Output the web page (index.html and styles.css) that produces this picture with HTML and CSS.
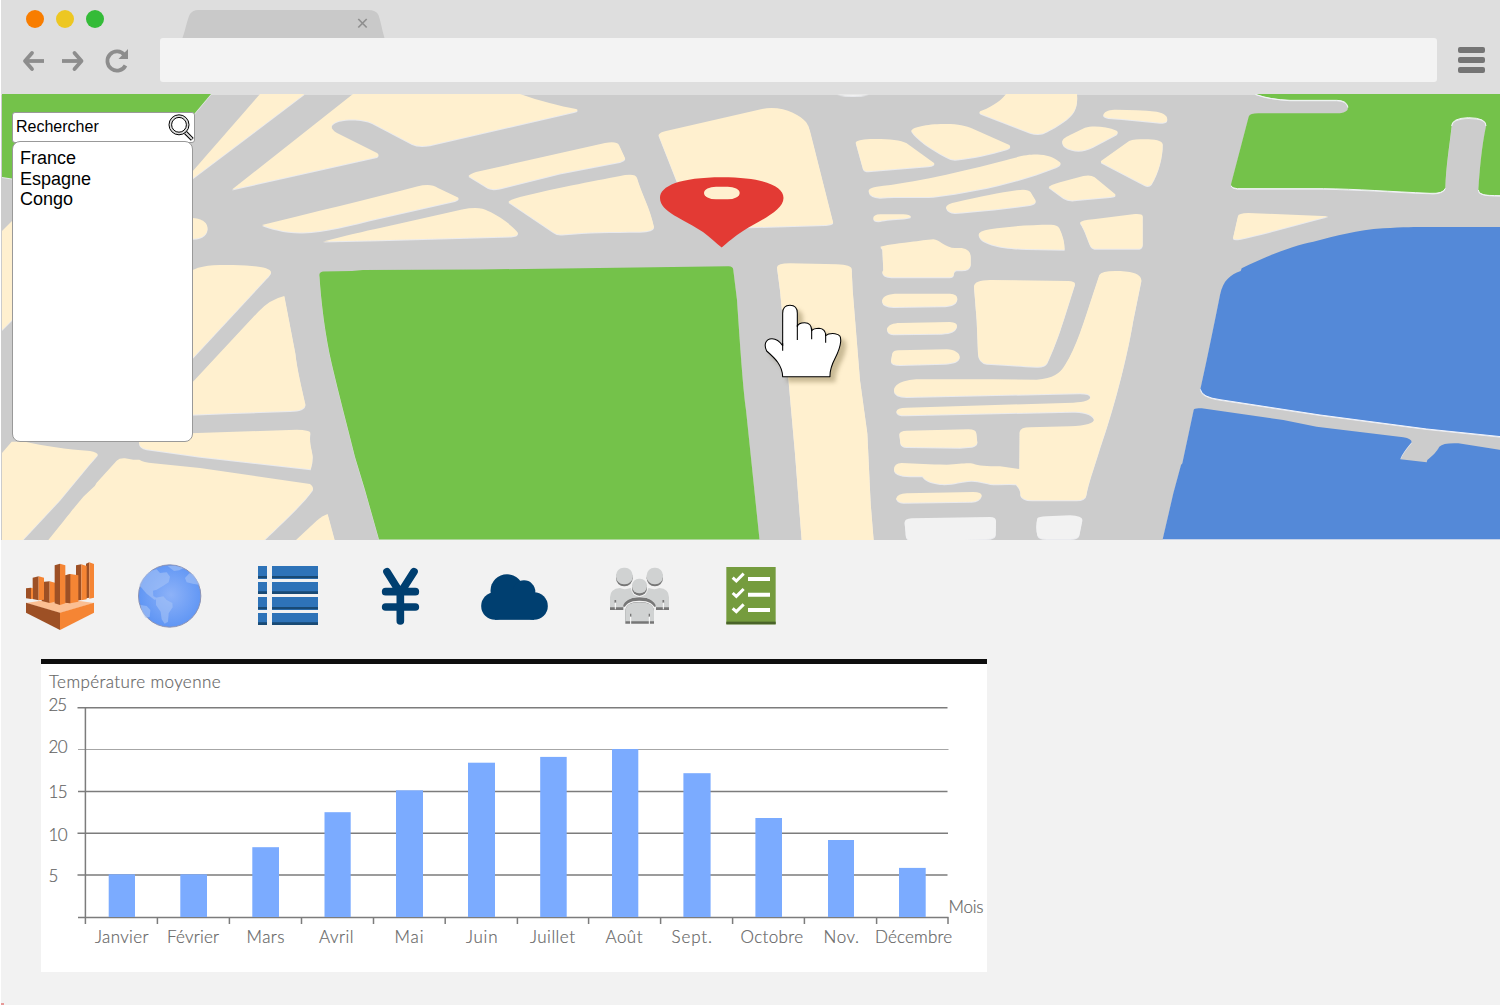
FILE: index.html
```
<!DOCTYPE html>
<html lang="fr">
<head>
<meta charset="utf-8">
<title>Carte</title>
<link rel="stylesheet" href="styles.css">
</head>
<body>
<div class="window">
  <header class="chrome">
    <div class="tab-row">
      <span class="light light-red"></span>
      <span class="light light-yellow"></span>
      <span class="light light-green"></span>
      <svg class="tab" viewBox="182 10 203 28" width="203" height="28">
        <path fill="#c9c9c9" d="M182.500,38C186,28 187,20 190,14Q193,10 198,10H368Q376,10 378.500,15C381,22 382,30 384.500,38Z"/>
        <path stroke="#8f8f8f" stroke-width="1.700" d="M358.300,19L366.700,27.500M366.700,19L358.300,27.500"/>
      </svg>
    </div>
    <div class="nav-row">
      <svg class="nav-icons" viewBox="18 43.500 116 34" width="116" height="34" fill="none" stroke="#8d8d8d" stroke-width="3.800">
        <path stroke-linecap="round" stroke-linejoin="round" d="M32,53.500L25,61.500L32,69.500"/><path d="M25,61.500H44"/>
        <path stroke-linecap="round" stroke-linejoin="round" d="M74.500,53.500L81.500,61.500L74.500,69.500"/><path d="M62,61.500H81"/>
        <path d="M124.500,55.500A9.600,9.600 0 1 0 125.500,66"/>
        <path fill="#8d8d8d" stroke="none" d="M128,49.500V59.500H118.500Z"/>
      </svg>
      <div class="address"></div>
      <div class="burger"><i></i><i></i><i></i></div>
    </div>
  </header>

  <section class="map">
    <svg class="map-art" viewBox="1 94 1499 446" width="1499" height="446">
      <rect x="1" y="95" width="1499" height="445" fill="#ccc"/>
      <g class="blocks" fill="#fff0cf">
        <path fill="#74c24a" d="M2,94H211L130,190L12,178.500L2,177Z"/>
        <path d="M2,231L14,219V318L2,330Z"/>
        <path d="M190,218C204,218 208,224 207.500,229C207,236 200,239 190,239Z"/>
        <path d="M260,94H304.500L192,179V172Z"/>
        <path d="M353,94H520C540,101 560,106 576,109Q580,110.500 574,112L430,145.300Q418,147 412,144L372,123C362,118 337,118 332,125Q330,129 337,133L377,153Q380,155 377,157L232,189.500Z"/>
        <path d="M262,225C310,213 370,199 417,186.500Q431,183 438,188L458,197.500Q460,199 455,201L380,218C350,225 325,232 303,232.500C285,233 270,228 262,225Z"/>
        <path d="M323,241.500C345,236 365,231 380,228L462,209.500Q480,206 488,211C500,216 514,227 518,233Q518,236 511,236.500L380,240.200Z"/>
        <path d="M468.500,176Q470,174 476,172L605,143Q617,141 619,145L625,158Q626,160 620,162L560,173.500L500,188.500Q492,190 488,188Z"/>
        <path d="M508.500,202Q509,200 520,197C560,187 600,180 625,175Q636,173.500 637,178C641,192 650,208 654,227Q654,231 640,231.800C610,232 590,232 562,234.500Q557,235 553,232Z"/>
        <path d="M658.500,135Q660,132 666,131L762,109C782,105 800,115 806,122Q809,126 810,131L833,222Q834,224 826,225L725,228L688,210Z"/>
        <path fill="#f2f2f2" d="M837,94.500H869Q853,97.500 837,94.500Z"/>
        <path fill="#74c24a" d="M319.500,277Q318.500,272 323,271.500L352,271L363,270L480,269.500L728,266.300Q733,266 733.300,270L737,300C740,345 743,390 746,410L759.500,539.500H379L365,490L355,457C347,425 339,395 332,365C325,335 321,300 319.500,277Z"/>

        <g transform="translate(0 260) scale(.33333)">
          <path d="M570,35C600,15 640,15 700,15C760,16 815,22 813,38Q812,42 800,55L570,303Z"/>
          <path d="M570,375L775,155Q810,118 853,108L886,280C892,330 900,360 916,432Q918,452 870,453L700,459L570,464Z"/>
          <path d="M417,540L570,520L890,509Q930,510 931,518C927,555 937,570 938,590Q938,610 932,628L600,590L440,568Q416,562 417,546Z"/>
          <path d="M6,579L35,545H75C130,558 200,567 270,573Q295,578 293,585L265,617L180,720L68,840H6Z"/>
          <path d="M145,840C190,785 220,745 250,710L285,677L290,668L350,602Q358,594 375,595L400,599L418,599Q430,607 460,610L600,624L930,672Q942,680 938,690C910,730 850,785 793,840Z"/>
          <path d="M888,840L950,782Q970,766 983,762L1004,840Z"/>
        </g>

        <g transform="translate(760 90) scale(.33333)">
          <path d="M287,157Q290,150 330,147C380,146 420,149 440,160L522,219Q528,225 505,229L325,244Q313,244 309,236Z"/>
          <path d="M454,123C455,112 500,102 550,102C590,101 615,106 640,117L748,165Q756,172 740,178C690,193 640,205 585,209Q570,209 560,202C510,175 470,148 454,123Z"/>
          <path d="M738,12H951C954,50 945,72 910,95C890,110 865,122 850,130Q830,135 810,128L662,71Q652,65 668,61C700,48 725,30 738,12Z"/>
          <path d="M1030,74C1035,62 1050,59 1070,59C1110,60 1150,60 1190,65C1215,70 1225,80 1221,92Q1218,98 1200,98C1150,94 1100,88 1045,84Q1028,80 1030,74Z"/>
          <path d="M907,158C905,148 915,143 930,135L975,113C1000,106 1040,110 1070,122Q1078,128 1065,136L1000,170C975,182 955,185 935,179Q908,172 907,158Z"/>
          <path d="M1024,212L1100,158Q1113,148 1140,148C1180,147 1205,150 1208,162C1209,200 1195,250 1175,282Q1167,292 1153,285L1028,220Q1020,215 1024,212Z"/>
          <path d="M326,303Q325,294 350,290C460,278 600,247 740,210C790,195 810,193 840,194C870,195 890,208 900,217Q906,224 890,231C780,275 650,305 520,320C460,322 420,319 360,323Q328,321 326,303Z"/>
          <path d="M558,352Q560,342 590,336C660,320 720,308 770,301Q805,296 812,307L826,330Q831,341 810,345C740,355 650,364 585,369Q562,368 558,352Z"/>
          <path d="M866,292Q868,286 900,277L970,258Q992,253 1004,262L1065,312Q1072,319 1050,321L950,330Q925,334 910,324Z"/>
          <path d="M340,385Q340,374 360,373H430Q450,373 453,381Q445,385 420,386C390,387 370,391 355,394Q340,394 340,385Z"/>
          <path d="M361,470Q380,464 450,456C480,453 500,449 520,448C540,450 545,465 575,473Q590,475 605,474Q632,478 632,500V525Q630,541 605,541H590Q581,543 581,556Q578,562 570,562H395Q366,560 367,545L370,540L367,478Z"/>
          <path d="M656,434Q656,424 690,418C750,408 820,404 870,404Q892,403 898,415Q913,445 914,479L800,477C730,475 660,463 656,434Z"/>
          <path d="M960,398Q965,391 1000,388L1125,372Q1148,371 1148,378V465Q1147,475 1138,476H1005Q995,477 989,463C980,440 972,415 960,398Z"/>
          <path d="M366,633C368,618 385,611 415,611H570Q592,612 592,627C590,642 575,648 545,649L400,651Q368,650 366,633Z"/>
          <path d="M642,590Q643,570 690,570L925,573Q946,574 945,583L911,690C895,740 880,780 862,818Q855,831 830,830C780,828 740,824 680,821Q655,818 654,790L650,690Z"/>
          <path d="M1018,555Q1025,543 1065,543C1110,543 1145,550 1144,572L1120,690C1100,810 1060,960 1020,1075C1000,1140 985,1180 979,1215Q978,1230 950,1231H815Q785,1230 781,1215C783,1200 773,1190 768,1183Q760,1181 700,1183C675,1179 660,1173 635,1172C600,1173 580,1185 540,1182C505,1177 495,1170 487,1159H450Q402,1158 402,1138Q402,1120 425,1119C470,1120 510,1124 560,1124C600,1122 620,1118 640,1121C655,1128 680,1128 720,1129L778,1137L779,1025Q782,1012 810,1012L930,1009C980,1007 1002,1000 1002,988C998,970 965,965 935,965L440,976Q410,977 409,965Q410,953 440,953L940,938Q992,936 991,920Q988,910 960,910L440,921Q402,920 402,902C403,875 450,868 480,868H700L830,869C880,866 900,850 915,825C950,770 970,700 1003,600Z"/>
          <path d="M381,717C384,705 400,699 420,699L570,696Q592,697 591,709C588,722 575,730 545,731L400,733Q381,731 381,717Z"/>
          <path d="M397,790Q400,781 415,781L560,778C585,779 600,790 599,802C597,815 580,820 555,821L420,825Q393,825 393,812Z"/>
          <path d="M418,1032Q420,1023 440,1022L625,1018Q648,1018 649,1030L652,1058Q650,1070 625,1071L600,1073L440,1071Q422,1070 421,1058Z"/>
          <path d="M409,1225Q412,1212 440,1210L640,1206Q665,1206 665,1217Q660,1234 635,1235L430,1238Q410,1237 409,1225Z"/>
          <path d="M51,532Q52,520 90,520L230,523Q275,525 275,537L278,600L300,870L322,1030L332,1240L341,1350H125L105,1090L85,865L60,600Z"/>
          <path fill="#f2f2f2" d="M434,1300Q432,1286 455,1285L690,1281Q709,1281 708,1295L707,1335Q705,1346 680,1347L590,1351H450Q436,1348 437,1330ZM832,1285Q835,1280 860,1279L930,1276Q968,1278 967,1290L958,1335Q955,1347 930,1347H860Q835,1347 832,1335Q826,1310 832,1285Z"/>
        </g>

        <g transform="translate(1150 0) scale(.33333)">
          <path fill="#74c24a" d="M316,282H1053V587Q1010,587 1000,583Q984,578 985,568C990,500 995,440 1008,378Q1010,354 955,354Q905,356 905,378C898,440 888,500 886,565Q880,582 840,580C720,575 620,567 520,566H262Q243,564 243,553L296,350Q300,340 325,340H570Q594,337 594,322Q590,301 560,301H420Q360,298 316,282Z"/>
          <path d="M264,648Q265,640 295,639L535,649C450,670 350,700 270,717Q250,720 249,714Z"/>
          <path fill="#5489d8" d="M275,805C350,767 430,737 490,725C560,708 620,690 700,685C760,681 800,681 830,681H1053V1310L830,1287L510,1245L210,1199Q155,1192 151,1168C175,1060 195,960 210,885C220,840 240,825 272,813Z"/>
          <path fill="#5489d8" d="M131,1230Q132,1223 155,1225L400,1260L500,1280L760,1312Q785,1316 785,1327C770,1345 755,1365 751,1378L830,1387L832,1380C850,1365 860,1355 868,1340Q880,1328 925,1330L1053,1350V1618H38L70,1480L93,1395L97,1390Z"/>
        </g>
      </g>

      <g class="edges" fill="none" stroke="#f4f5fa" stroke-width="3" transform="translate(1150 0) scale(.33333)">
        <path d="M316,283Q360,299 420,301H560Q590,301 594,322M905,378Q905,355 955,353Q1010,354 1008,378M243,558Q246,565 262,566H520C620,567 720,575 840,580Q880,582 886,565M985,570Q984,580 1000,584Q1010,587 1053,587"/>
        <path d="M151,1168Q155,1192 210,1199L510,1245L830,1287L1053,1310"/>
      </g>

      <path fill="#e33a34" d="M721.700,247.500C716,243 710,237 703,232C684,219 660,212 660,198C660,186 680,177.300 722,177.300C763,177.300 783.500,186 783.500,198C783.500,211 760,220 743,231C735,236 727,243 721.700,247.500Z"/>
      <rect x="704" y="186.700" width="35.700" height="12.600" rx="12" ry="6.300" fill="#fff0cf"/>

      <g class="pointer" transform="translate(760 290) scale(.33333)" fill="#fff" stroke="#000" stroke-width="3.200" stroke-linejoin="round">
        <path d="M68,260C67,225 45,205 20,183C12,168 14,146 36,146C50,146 60,155 68,167V70C68,52 78,46 90,46C104,46 112,54 112,70V110C114,100 122,98 134,98C148,98 155,104 155,122C160,116 168,115 177,115C190,116 197,122 197,137C205,130 215,130 225,131C240,133 243,140 242,155C238,200 208,215 210,260Z"/>
        <path fill="none" d="M68,160V182M112,105V150M155,115V148M197,130V158"/>
      </g>
    </svg>

    <div class="search">
      <div class="search-box">
        <span>Rechercher</span>
        <svg viewBox="168 113 27 29" width="27" height="29" fill="none">
          <path stroke="#000" stroke-width="4" d="M185.500,132.500L192.300,139.300"/>
          <path stroke="#ddd" stroke-width="1.800" d="M185.500,132.500L192,139"/>
          <circle cx="179" cy="124.800" r="8.600" stroke="#ddd" stroke-width="2.400"/>
          <circle cx="179" cy="124.800" r="10" stroke="#000"/>
          <circle cx="179" cy="124.800" r="7.400" stroke="#000"/>
        </svg>
      </div>
      <ul class="results">
        <li>France</li>
        <li>Espagne</li>
        <li>Congo</li>
      </ul>
    </div>
  </section>

  <nav class="tools">
    <svg viewBox="3 0 345 270" width="115" height="90">
      <path fill="#fbbf93" d="M78,159L122,152L164,156L180,160L235,152L282,159L180,189Z"/>
      <g fill="#9d5025">
        <path d="M78,115L93,113V147L78,145Z"/><path d="M258,41L268,37V143L258,145Z"/><path d="M228,46L244,43V150L228,152Z"/>
        <path d="M98,83L116,79V151L98,147Z"/><path d="M125,96L149,94V159L125,153Z"/>
      </g>
      <g fill="#f58534">
        <path d="M93,113L99,115V146L93,147Z"/><path d="M268,37L282,42V143L268,146Z"/><path d="M244,43L260,48V148L244,151Z"/>
        <path d="M116,79L132,83V149L116,151Z"/><path d="M149,94L165,98V155L149,159Z"/>
        <path d="M196,76L211,72L235,76V155L211,160L196,158Z"/><path d="M180,41L196,46V160L180,165Z"/>
      </g>
      <path fill="#9d5025" d="M196,76L211,72V160L196,158Z"/>
      <path fill="#9d5025" d="M164,46L180,41V165L164,160Z"/>
      <path fill="#9d5025" d="M78,158L180,188V240L78,188Z"/>
      <path fill="#f58534" d="M282,158L180,188V240L282,188Z"/>
    </svg>
    <svg viewBox="348 0 342 270" width="114" height="90">
      <defs><radialGradient id="sea" cx=".52" cy=".48" r=".55"><stop offset="0" stop-color="#8db2f8"/><stop offset="1" stop-color="#5d94f4"/></radialGradient></defs>
      <circle cx="509" cy="138" r="93.500" fill="url(#sea)" stroke="#8c93b5" stroke-width="3"/>
      <g fill="#a6c3f6" opacity=".6">
        <path d="M455,62L470,58L480,69L500,67L510,80L506,97L490,107L470,119L459,122L460,138L475,147L463,149L440,131L418,106C424,88 438,72 455,62Z"/>
        <path d="M468,143L490,139L500,150L517,159L518,172L506,190L504,215L494,221L485,208L482,185L468,165Z"/>
        <path d="M503,48L525,47L551,54L538,61L522,63Z"/>
        <path d="M555,84L568,70L580,73L600,105L578,101L560,97Z"/>
        <path d="M422,165L440,168L451,180L449,201L436,203Q424,186 422,165Z"/>
      </g>
    </svg>
    <svg viewBox="690 0 360 270" width="120" height="90">
      <g fill="#2e73b8"><path d="M774,48H801V87H774ZM816,48H954V87H816ZM774,96H801V132H774ZM816,96H954V132H816ZM774,141H801V180H774ZM816,141H954V180H816ZM774,189H801V225H774ZM816,189H954V225H816Z"/></g>
      <g fill="#194a74"><path d="M774,78H801V85H774ZM816,78H954V85H816ZM774,124H801V132H774ZM816,124H954V132H816ZM774,171H801V178H774ZM816,171H954V178H816ZM774,217H801V225H774ZM816,217H954V225H816Z"/></g>
    </svg>
    <svg viewBox="-30 0 300 270" width="100" height="90" fill="none" stroke="#003f70" stroke-width="23" stroke-linecap="round">
      <path stroke-linejoin="round" d="M81,65L121,129L162,65M121,125V213M77,125H166M77,171H166"/>
    </svg>
    <svg viewBox="270 0 384 270" width="128" height="90" fill="#003f70">
      <circle cx="441" cy="122" r="49.500"/><circle cx="492" cy="125" r="34"/><circle cx="405" cy="168" r="41.500"/><circle cx="522" cy="168" r="41.500"/><rect x="405" y="120" width="117" height="89.500"/>
    </svg>
    <svg viewBox="654 0 360 270" width="120" height="90">
      <g id="people">
        <g fill="#777">
          <rect x="768" y="60" width="50" height="49" rx="24"/><rect x="860" y="60" width="49" height="49" rx="24"/>
          <path d="M750,150H790V180H750ZM888,150H927V180H888Z"/>
          <path d="M790,170Q792,142 838,142Q882,142 888,170Z"/>
        </g>
        <g fill="#d0d2d2">
          <rect x="768" y="53" width="50" height="50" rx="23"/><rect x="860" y="53" width="49" height="50" rx="23"/>
          <path d="M750,172V142Q750,116 780,114Q793,121 812,114Q822,128 835,140Q800,142 788,172ZM927,172V142Q927,116 898,114Q884,121 866,114Q856,130 842,140Q878,142 888,172Z"/>
        </g>
        <path fill="none" stroke="#777" stroke-width="5" d="M792,168Q796,149 837,148Q880,149 885,168M766,150V158M910,150V158"/>
        <path stroke="#fff" stroke-width="3" d="M766,158V178M910,158V178"/>
        <rect x="813" y="83" width="51" height="57" rx="25" fill="#f2f2f2"/>
        <rect x="816" y="92" width="45" height="45" rx="22" fill="#777"/>
        <rect x="816" y="86" width="45" height="44" rx="21" fill="#d0d2d2"/>
        <path fill="#777" stroke="#f2f2f2" stroke-width="4" d="M794,223V182Q796,154 838,154Q881,154 884,182V223Z"/>
        <path fill="#d0d2d2" d="M796,214V182Q798,157 838,157Q880,157 882,182V214Z"/>
        <path stroke="#777" stroke-width="4" d="M812,191V200M868,191V200"/>
        <path stroke="#fff" stroke-width="3" d="M812,200V222M868,200V222"/>
      </g>
    </svg>
    <svg viewBox="1014 0 306 270" width="102" height="90">
      <rect x="1099" y="51" width="148" height="172" fill="#759c3e"/>
      <rect x="1099" y="215" width="148" height="8" fill="#4a642a"/>
      <g fill="none" stroke="#fff">
        <path stroke-width="9" d="M1118,83L1129,93L1151,71M1118,129L1129,139L1151,117M1118,175L1129,185L1151,163"/>
        <path stroke-width="12" d="M1164,87H1230M1164,134H1230M1164,180H1230"/>
      </g>
    </svg>
  </nav>

  <section class="chart">
    <svg viewBox="41 664 946 308" width="946" height="308">
      <g stroke="#7c7c7c" stroke-width="1.500">
        <path d="M77.500,707.800H947.500M78,791.500H947.500M77.500,833.200H948M77.500,875H947.500"/>
        <path stroke="#a6a6a6" stroke-width="1.200" d="M78,749.500H948.500"/>
        <path fill="none" d="M85.400,707V924M78,917.400H948.500M157.400,917V924M229.400,917V924M301.500,917V924M373.500,917V924M445.200,917V924M517.400,917V924M588.600,917V924M660.600,917V924M732.600,917V924M804.400,917V924M876.600,917V924M948,917V924"/>
      </g>
      <g fill="#7babff">
        <rect x="108.700" y="874.300" width="26.300" height="42.700"/><rect x="180.300" y="874.300" width="26.700" height="42.700"/>
        <rect x="252.300" y="847.200" width="26.700" height="69.800"/><rect x="324.500" y="812.200" width="26.200" height="104.800"/>
        <rect x="396" y="790.300" width="27" height="126.700"/><rect x="468" y="762.700" width="27" height="154.300"/>
        <rect x="540.200" y="756.900" width="26.500" height="160.100"/><rect x="612" y="749" width="26.300" height="168"/>
        <rect x="683.400" y="773.200" width="27.200" height="143.800"/><rect x="755.400" y="818" width="26.600" height="99"/>
        <rect x="828" y="840" width="26" height="77"/><rect x="899" y="867.900" width="26.700" height="49.100"/>
      </g>
      <g class="labels">
        <text x="49" y="688" textLength="171.500">Température moyenne</text>
        <text x="48.500" y="711" textLength="18.500">25</text><text x="48.500" y="752.700" textLength="19">20</text>
        <text x="48.500" y="798.300" textLength="19">15</text><text x="48.500" y="840.700" textLength="19">10</text><text x="48.500" y="881.500">5</text>
        <text x="95" y="943" textLength="53.500">Janvier</text><text x="167" y="943" textLength="52">Février</text>
        <text x="246.500" y="943" textLength="38">Mars</text><text x="319" y="943" textLength="34.500">Avril</text>
        <text x="394.500" y="943" textLength="29">Mai</text><text x="466" y="943" textLength="31.500">Juin</text>
        <text x="530" y="943" textLength="45">Juillet</text><text x="605.500" y="943" textLength="37">Août</text>
        <text x="671.500" y="943" textLength="40.500">Sept.</text><text x="740.500" y="943" textLength="62.500">Octobre</text>
        <text x="823.500" y="943" textLength="35.500">Nov.</text><text x="875" y="943" textLength="77">Décembre</text>
        <text x="948.500" y="912.500" textLength="35">Mois</text>
      </g>
    </svg>
  </section>
  <i class="mark"></i>
</div>
</body>
</html>
```
FILE: styles.css
```
body { margin: 0; background: #fff; overflow: hidden; font-family: "Liberation Sans", Arial, sans-serif; }
svg { display: block; flex: none; }
.window { display: flex; flex-direction: column; width: 1499px; height: 1005px; margin-left: 1px; background: #f2f2f2; }

.chrome { flex: none; height: 94px; background: #dedede; }
.tab-row { display: flex; align-items: center; gap: 12px; height: 38px; padding-left: 25px; }
.light { width: 18px; height: 18px; border-radius: 50%; }
.light-red { background: #f87d00; }
.light-yellow { background: #edc722; }
.light-green { background: #34bb38; }
.tab { align-self: flex-end; margin-left: 66px; }
.nav-row { display: flex; align-items: center; height: 44px; padding-left: 17px; }
.address { width: 1277px; height: 44px; margin-left: 26px; border-radius: 3px; background: #f3f3f3; }
.burger { display: grid; gap: 4px; width: 27px; margin-left: 21px; }
.burger i { height: 6px; border-radius: 2px; background: #757575; }

.map { position: relative; flex: none; height: 446px; background: #dedede; }
.blocks { filter: drop-shadow(0 1px 0 rgba(240, 241, 246, .8)); }
.pointer { filter: drop-shadow(15px 15px 6px rgba(60, 45, 0, .28)); }
.search { position: absolute; left: 11px; top: 18px; width: 183px; }
.search-box { box-sizing: border-box; display: flex; justify-content: space-between; align-items: center; height: 31px; padding-left: 3px; border: 1px solid #999; border-radius: 3px; background: #fff; font-size: 16px; }
.search-box span { padding-bottom: 1px; }
.search-box svg { margin-right: -1px; }
.results { box-sizing: border-box; width: 181px; height: 301px; margin: -2px 0 0; padding: 6px 0 0 7px; border: 1px solid #999; border-radius: 8px; background: #fff; list-style: none; font-size: 18px; line-height: 20.6px; }

.tools { display: flex; flex: none; height: 109px; padding-top: 10px; }
.chart { flex: none; width: 946px; margin-left: 40px; border-top: 5px solid #0e0e0e; background: #fff; }
.labels { font-family: Lato, "Open Sans", sans-serif; font-weight: 300; font-size: 17px; fill: #666; stroke: #666; stroke-width: .2px; }
.mark { width: 3px; height: 2px; margin-top: auto; background: #e79a98; }
```
